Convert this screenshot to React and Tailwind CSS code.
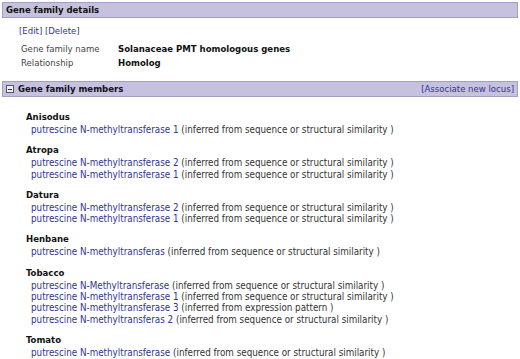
import React from 'react';

// 유전자 패밀리 상세 페이지
const FONT = { fontFamily: '"DejaVu Sans Condensed", "DejaVu Sans", Verdana, sans-serif' };

const MEMBERS = [
  {
    organism: 'Anisodus',
    loci: [['putrescine N-methyltransferase 1', 'inferred from sequence or structural similarity']],
  },
  {
    organism: 'Atropa',
    loci: [
      ['putrescine N-methyltransferase 2', 'inferred from sequence or structural similarity'],
      ['putrescine N-methyltransferase 1', 'inferred from sequence or structural similarity'],
    ],
  },
  {
    organism: 'Datura',
    loci: [
      ['putrescine N-methyltransferase 2', 'inferred from sequence or structural similarity'],
      ['putrescine N-methyltransferase 1', 'inferred from sequence or structural similarity'],
    ],
  },
  {
    organism: 'Henbane',
    loci: [['putrescine N-methyltransferas', 'inferred from sequence or structural similarity']],
  },
  {
    organism: 'Tobacco',
    loci: [
      ['putrescine N-Methyltransferase', 'inferred from sequence or structural similarity'],
      ['putrescine N-methyltransferase 1', 'inferred from sequence or structural similarity'],
      ['putrescine N-methyltransferase 3', 'inferred from expression pattern'],
      ['putrescine N-methyltransferas 2', 'inferred from sequence or structural similarity'],
    ],
  },
  {
    organism: 'Tomato',
    loci: [['putrescine N-methyltransferase', 'inferred from sequence or structural similarity']],
  },
];

const SectionBar = ({ children, right, collapsible }) => (
  <div className="flex items-center justify-between h-[16px] mx-[2px] px-[3px] bg-[#c5c1de] border border-[#a29ec6]">
    <div className="flex items-center gap-[4px]">
      {collapsible && (
        <span className="flex items-center justify-center w-[8px] h-[8px] border border-[#555] bg-[#eeeef6]">
          <span className="block w-[4px] h-px bg-[#333]" />
        </span>
      )}
      <span className="text-[9.5px] font-bold text-[#111]">{children}</span>
    </div>
    {right && <span className="text-[9.5px] text-[#333399]">{right}</span>}
  </div>
);

export default function App() {
  return (
    <div className="w-[520px] h-[359px] overflow-hidden bg-white pt-[2px]" style={FONT}>
      <SectionBar>Gene family details</SectionBar>

      <div className="pl-[19px] pt-[6px] text-[9.5px] leading-[14px]">
        <div className="text-[#333399]">[Edit] [Delete]</div>
        <div className="pl-[2px] pt-[4px]">
          <div className="flex">
            <span className="w-[97px] text-[#444]">Gene family name</span>
            <span className="font-bold text-[#111]">Solanaceae PMT homologous genes</span>
          </div>
          <div className="flex">
            <span className="w-[97px] text-[#444]">Relationship</span>
            <span className="font-bold text-[#111]">Homolog</span>
          </div>
        </div>
      </div>

      <div className="pt-[11px]">
        <SectionBar collapsible right="[Associate new locus]">Gene family members</SectionBar>
      </div>

      <div className="pl-[26px] pt-[14px] flex flex-col gap-[9px] text-[9.75px]">
        {MEMBERS.map((group) => (
          <div key={group.organism}>
            <div className="text-[9.5px] font-bold text-[#111] leading-[12px]">{group.organism}</div>
            <div className="pl-[5px] pt-[1px]">
              {group.loci.map(([name, evidence], i) => (
                <div key={i} className="leading-[11.3px] whitespace-nowrap">
                  <span className="text-[#2e3592]">{name}</span>
                  <span className="text-[#333]"> ({evidence} )</span>
                </div>
              ))}
            </div>
          </div>
        ))}
      </div>
    </div>
  );
}
